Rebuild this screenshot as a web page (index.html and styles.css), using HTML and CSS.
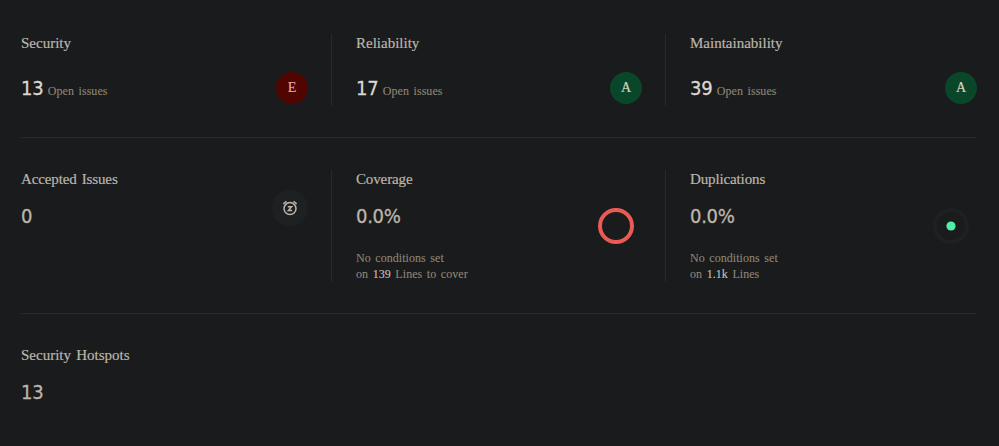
FILE: index.html
```html
<!DOCTYPE html>
<html lang="en">
<head>
<meta charset="utf-8">
<title>Project overview</title>
<link rel="stylesheet" href="styles.css">
</head>
<body>
<main class="measures">
  <section class="row row-ratings">
    <article class="card">
      <h2 class="title">Security</h2>
      <div class="line"><p class="count"><strong class="value bright">13</strong><span class="note">Open issues</span></p><span class="rating rating-e">E</span></div>
    </article>
    <article class="card">
      <h2 class="title">Reliability</h2>
      <div class="line"><p class="count"><strong class="value bright">17</strong><span class="note">Open issues</span></p><span class="rating rating-a">A</span></div>
    </article>
    <article class="card">
      <h2 class="title">Maintainability</h2>
      <div class="line"><p class="count"><strong class="value bright">39</strong><span class="note">Open issues</span></p><span class="rating rating-a">A</span></div>
    </article>
  </section>
  <section class="row row-details">
    <article class="card split">
      <div>
        <h2 class="title tight">Accepted Issues</h2>
        <strong class="value">0</strong>
      </div>
      <span class="snooze">
        <svg width="16" height="16" viewBox="0 0 16 16" fill="none" stroke="currentColor" stroke-width="1.5">
          <circle cx="8" cy="8.6" r="6"/>
          <path d="M1.3 3.8 4.5 1.4M14.7 3.8 11.5 1.4"/>
          <path d="M5.8 6.7h3.8L6.4 10.6h3.8"/>
        </svg>
      </span>
    </article>
    <article class="card split">
      <div>
        <h2 class="title tight">Coverage</h2>
        <strong class="value">0.0%</strong>
        <p class="note conditions">No conditions set<br>on <b>139</b> Lines to cover</p>
      </div>
      <svg class="ring" width="36" height="36" viewBox="0 0 36 36"><circle cx="18" cy="18" r="16" fill="none" stroke="#e95b54" stroke-width="4"/></svg>
    </article>
    <article class="card split">
      <div>
        <h2 class="title tight">Duplications</h2>
        <strong class="value">0.0%</strong>
        <p class="note conditions">No conditions set<br>on <b>1.1k</b> Lines</p>
      </div>
      <svg class="ring" width="36" height="36" viewBox="0 0 36 36"><circle cx="18" cy="18" r="16" fill="none" stroke="#1d2122" stroke-width="4"/><circle cx="18" cy="18" r="4.6" fill="#4ff0a4"/></svg>
    </article>
  </section>
  <section class="row row-hotspots">
    <article class="card">
      <h2 class="title">Security Hotspots</h2>
      <strong class="value">13</strong>
    </article>
  </section>
</main>
</body>
</html>
```

FILE: styles.css
```css
* { box-sizing: border-box; }
body {
  margin: 0;
  height: 446px;
  overflow: hidden;
  background: #1a1b1c;
  color: #bcb5aa;
  font-family: "Liberation Serif", serif;
  -webkit-text-stroke: 0.2px currentColor;
}
h2, p { margin: 0; }
.measures { width: 956px; margin-left: 21px; }
.row {
  display: grid;
  grid-template-columns: 311px 310px 287px;
  column-gap: 24px;
  border-bottom: 1px solid #27292a;
}
.row-ratings { height: 138px; padding: 34px 0 31px; }
.row-details { height: 176px; padding: 32px 0 31px; }
.row-hotspots { padding-top: 32px; border-bottom: 0; }
.card { padding-right: 23px; border-right: 1px solid #27292a; }
.card:nth-child(3), .row-hotspots .card { padding-right: 0; border-right: 0; }
.title {
  font-size: 15px;
  font-weight: 400;
  line-height: 18px;
  word-spacing: 1.5px;
  white-space: nowrap;
}
.tight { letter-spacing: -0.13px; }
.line {
  display: flex;
  align-items: center;
  justify-content: space-between;
  height: 32px;
  margin-top: 20px;
}
.count { display: flex; align-items: baseline; gap: 4.5px; }
.value {
  display: block;
  font-family: "DejaVu Sans Condensed", "DejaVu Sans", sans-serif;
  font-size: 20px;
  font-weight: 400;
  line-height: 26px;
  letter-spacing: -0.3px;
  -webkit-text-stroke-width: 0.3px;
}
.bright { color: #dbd7d1; }
.title + .value { margin-top: 15px; }
.note {
  color: #8f8678;
  font-size: 12px;
  line-height: 16px;
  letter-spacing: 0.05px;
  word-spacing: 1.5px;
  -webkit-text-stroke-width: 0.1px;
}
.note b { color: #c9c4bc; font-weight: 400; }
.conditions { margin-top: 21px; }
.rating {
  display: grid;
  place-items: center;
  width: 32px;
  height: 32px;
  border-radius: 50%;
  font-size: 14px;
}
.rating-e { background: #510500; color: #eaa49d; }
.rating-a { background: #0a472a; color: #d5d4bd; }
.split { display: flex; justify-content: space-between; }
.snooze {
  display: grid;
  place-items: center;
  width: 36px;
  height: 36px;
  margin-top: 20px;
  border-radius: 50%;
  background: #1d2122;
}
.ring { margin: 38px 8px 0 0; }
```
